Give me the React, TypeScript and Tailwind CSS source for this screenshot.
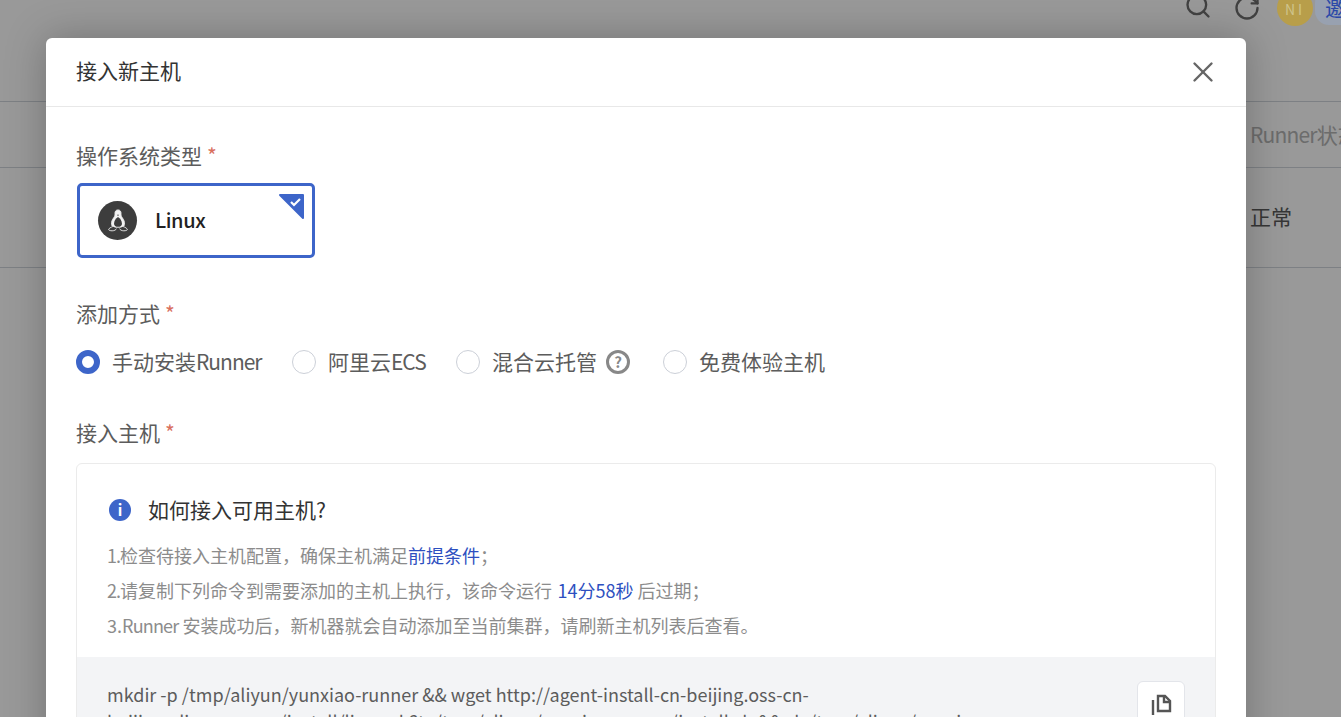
import { Search, RotateCw, X } from "lucide-react";

const fontStack = "font-['Noto_Sans_CJK_SC','Noto_Sans',sans-serif]";

function Latin({ text, className }: { text: string; className: string }) {
    return <span className={className}>{text}</span>;
}

function Required({ text }: { text: string }) {
    return (
        <div className="h-[30px] pb-[2px] flex items-center text-[21px] leading-[28px] text-[#5c5c5c]">
            {text}
            <span className="ml-[5px] text-[21px] text-[#d9705f]">*</span>
        </div>
    );
}

function Radio({ checked }: { checked: boolean }) {
    if (checked) {
        return <span className="w-6 h-6 rounded-full border-[6px] border-[#3d65c9] bg-white" />;
    }
    return <span className="w-6 h-6 rounded-full border border-[#ccd0d8] bg-white" />;
}

function Penguin() {
    return (
        <svg viewBox="0 0 24 24" className="w-[28px] h-[28px]" fill="none" stroke="#e8e8e8" strokeWidth="0.8">
            <path d="M12 2.500c-1.900 0-2.700 1.500-2.600 3.200.1 1.300-.2 2.200-1 3.400C7 11 6.200 12.800 6.500 15c.1.900.6 1.700 1.200 2.300h8.600c.6-.6 1.100-1.400 1.200-2.300.3-2.200-.5-4-1.900-5.900-.8-1.200-1.100-2.100-1-3.400.1-1.700-.7-3.200-2.600-3.200z" fill="#f2f2f2" />
            <path d="M12 8.500c-1.900 1-3.400 3.500-3.400 5.800 0 1.500 1.300 2.700 3.400 2.700s3.400-1.200 3.400-2.700c0-2.300-1.500-4.800-3.400-5.800z" fill="#3d3d3d" stroke="none" />
            <path d="M7.500 16.800c-1.600.5-3.200 1.500-3.500 2.400-.2.800 1.400 1.200 3 1.200 1.800 0 3.300-.8 3.700-1.900M16.500 16.800c1.600.5 3.200 1.500 3.500 2.400.2.800-1.400 1.200-3 1.200-1.800 0-3.300-.8-3.700-1.900" fill="#3d3d3d" />
            <path d="M11 6.700h2l-1 1z" fill="#3d3d3d" stroke="none" />
        </svg>
    );
}

function CopyIcon() {
    return (
        <svg viewBox="0 0 24 24" className="w-6 h-6" fill="none" stroke="#555555" strokeWidth="2.400">
            <path d="M4 7v15" />
            <path d="M9 3h7l5 5v10H9z" />
            <path d="M15 3v6h6" />
        </svg>
    );
}

export default function App() {
    return (
        <div className={`relative h-screen w-full overflow-hidden bg-white ${fontStack}`}>
            <div className="flex flex-col h-full">
                <div className="h-[102px] shrink-0 border-b border-gray-300 flex justify-end items-start">
                    {/* sits above the overlay so the colours can be given as seen */}
                    <div className="relative z-10 flex items-start -mr-[40px]">
                        <Search className="w-7 h-7 -mt-[8px] text-[#404040]" strokeWidth={2} />
                        <RotateCw className="w-7 h-7 -mt-[6px] ml-[21px] text-[#404040]" strokeWidth={2} />
                        <span className="ml-[16px] -mt-[10px] pt-[2px] w-9 h-9 rounded-full bg-[#b89e4a] text-[#cfc48c] text-[14px] tracking-[3px] flex items-center justify-center">
                            NI
                        </span>
                        <span className="w-[66px] h-[36px] -mt-[11px] ml-[2px] pl-[10px] pt-[3px] rounded-l-[14px] bg-[#98a1b0] text-[#2a48a8] text-[21px] leading-[30px] whitespace-nowrap overflow-hidden">
                            邀请
                        </span>
                    </div>
                </div>
                <div className="h-[66px] shrink-0 border-b border-gray-300 flex items-center justify-end text-[21px] text-[#b4b4b4] whitespace-nowrap">
                    <span className="-mr-[40px] w-[131px]">
                        <Latin text="Runner" className="tracking-[-0.8px]" />状态
                    </span>
                </div>
                <div className="h-[100px] shrink-0 border-b border-gray-300 flex items-center justify-end text-[21px] text-[#5a5a5a]">
                    <span className="w-[91px] -mt-[2px]">正常</span>
                </div>
            </div>

            <div className="absolute inset-0 bg-black/40" />

            <div className="absolute left-[46px] top-[38px] w-[1200px] bg-white rounded-[6px] shadow-[0_0_40px_rgba(0,0,0,0.25)] h-[800px]">
                <div className="h-[69px] pl-[30px] pr-[30px] border-b border-[#e8e8e8] flex items-center justify-between">
                    <h2 className="text-[21px] text-[#333] -mt-[2px]">接入新主机</h2>
                    <X className="w-[34px] h-[34px] -mr-[4px] text-[#666]" strokeWidth={1.7} />
                </div>

                <div className="px-[30px] pt-[34px]">
                    <Required text="操作系统类型" />
                    <div className="relative mt-[12px] ml-[1px] w-[238px] h-[75px] rounded-[5px] border-[3px] border-[#3d65c9] flex items-center pl-[18px] gap-[18px]">
                        <span className="w-[39px] h-[39px] rounded-full bg-[#3d3d3d] flex items-center justify-center">
                            <Penguin />
                        </span>
                        <span className="text-[20px] font-medium text-[#222] -mt-[2px] tracking-[-0.4px]">Linux</span>
                        <svg viewBox="0 0 25 25" className="absolute right-[8px] top-[8px] w-[25px] h-[25px]">
                            <path d="M1 0h23a1 1 0 0 1 1 1v23a1 1 0 0 1-1.700.7L.3 1.700A1 1 0 0 1 1 0z" fill="#3d65c9" />
                            <path d="M12 8l3 3 6-6" fill="none" stroke="#ffffff" strokeWidth="2.200" />
                        </svg>
                    </div>

                    <div className="mt-[41px]">
                        <Required text="添加方式" />
                    </div>
                    <div className="mt-[18px] flex items-center h-[30px] text-[21px] text-[#5c5c5c]">
                        <label className="flex items-center w-[216px]">
                            <Radio checked />
                            <span className="ml-3">
                                手动安装<Latin text="Runner" className="tracking-[-1px]" />
                            </span>
                        </label>
                        <label className="flex items-center w-[164px]">
                            <Radio checked={false} />
                            <span className="ml-3">
                                阿里云<Latin text="ECS" className="tracking-[-1px]" />
                            </span>
                        </label>
                        <label className="flex items-center w-[207px]">
                            <Radio checked={false} />
                            <span className="ml-3">混合云托管</span>
                            <span className="ml-[9px] w-6 h-6 rounded-full border-[3px] border-[#888] text-[#888] text-[15px] font-bold flex items-center justify-center">
                                ?
                            </span>
                        </label>
                        <label className="flex items-center">
                            <Radio checked={false} />
                            <span className="ml-3">免费体验主机</span>
                        </label>
                    </div>

                    <div className="mt-[41px]">
                        <Required text="接入主机" />
                    </div>
                    <div className="mt-[15px] rounded-[6px] border border-[#ebebeb]">
                        <div className="px-[30px] pt-[29px] pb-[14px]">
                            <div className="h-[34px] flex items-center text-[21px] text-[#333] pl-[2px]">
                                <span className="w-[22px] h-[22px] rounded-full bg-[#3d65c9] text-white text-[15px] font-bold flex items-center justify-center">
                                    i
                                </span>
                                <span className="ml-[17px]">如何接入可用主机?</span>
                            </div>
                            <div className="mt-[11px] text-[18px] leading-[35px] text-[#8c8c8c]">
                                <p>
                                    <Latin text="1." className="tracking-[-1px]" />检查待接入主机配置，确保主机满足<span className="text-[#2d4fc0]">前提条件</span>；
                                </p>
                                <p>
                                    <Latin text="2." className="tracking-[-1px]" />请复制下列命令到需要添加的主机上执行，该命令运行 <span className="ml-[1.5px] text-[#2d4fc0]">14分58秒</span> 后过期；
                                </p>
                                <p>
                                    3.<Latin text="Runner" className="tracking-[-0.8px]" /> 安装成功后，新机器就会自动添加至当前集群，请刷新主机列表后查看。
                                </p>
                            </div>
                        </div>
                        <div className="bg-[#f3f4f6] pl-[30px] pr-[30px] pt-[24px] flex items-start justify-between h-[200px]">
                            <p className="w-[920px] text-[18px] leading-[27px] text-[#5c5c5c]">
                                mkdir -p /tmp/aliyun/yunxiao-runner && wget http://agent-install-cn-beijing.oss-cn-beijing.aliyuncs.com/install/linux.sh?t=/tmp/aliyun/yunxiao-runner/install.sh && sh /tmp/aliyun/yunxiao-runner
                            </p>
                            <span className="w-12 h-12 rounded-[6px] border border-[#e3e5ea] bg-white flex items-center justify-center">
                                <CopyIcon />
                            </span>
                        </div>
                    </div>
                </div>
            </div>
        </div>
    );
}
